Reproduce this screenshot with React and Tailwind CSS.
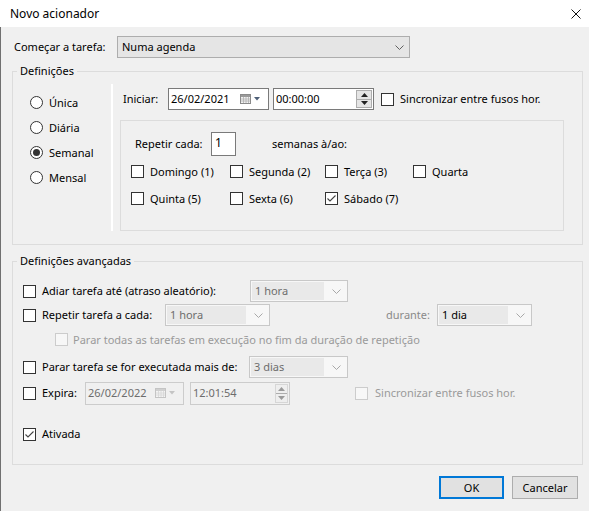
import React from "react";

const Check = ({ checked = false, disabled = false }) => (
  <span
    className={
      disabled
        ? "w-[13px] h-[13px] shrink-0 border border-[#cccccc] bg-[#f7f7f7] flex items-center justify-center"
        : "w-[13px] h-[13px] shrink-0 border border-[#333333] bg-white flex items-center justify-center"
    }
  >
    {checked && (
      <svg width="11" height="11" viewBox="0 0 11 11">
        <path d="M1.5 5.5 L4 8 L9.5 2.5" stroke="#444" strokeWidth="1.1" fill="none" />
      </svg>
    )}
  </span>
);

const Radio = ({ on = false, label }) => (
  <div className="h-[25px] flex items-center gap-[6px]">
    <span className="w-[13px] h-[13px] rounded-full border border-[#333333] bg-white flex items-center justify-center">
      {on && <span className="w-[7px] h-[7px] rounded-full bg-[#333333]" />}
    </span>
    <span>{label}</span>
  </div>
);

const Chevron = ({ color = "#606060" }) => (
  <svg width="9" height="5" viewBox="0 0 9 5">
    <path d="M0.5 0.5 L4.5 4.5 L8.5 0.5" stroke={color} fill="none" />
  </svg>
);

const Combo = ({ text, w, dark = false }) => (
  <div
    className="h-[22px] border border-[#c8c8c8] bg-[#f7f7f7] flex items-stretch shrink-0"
    style={{ width: w }}
  >
    <span
      className={
        dark
          ? "flex-1 m-[1px] bg-[#e9e9e9] pl-[3px] flex items-center text-black"
          : "flex-1 m-[1px] bg-[#e9e9e9] pl-[3px] flex items-center text-[#6d6d6d]"
      }
    >
      {text}
    </span>
    <span className="w-[22px] flex items-center justify-center">
      <Chevron color="#a8a8a8" />
    </span>
  </div>
);

const CalendarIcon = ({ disabled = false }) => (
  <span className="flex items-center gap-[3px]">
    <svg width="11" height="10" viewBox="0 0 11 10">
      <rect x="0.5" y="0.5" width="10" height="9" fill={disabled ? "#f4f4f4" : "#f2f2f2"} stroke={disabled ? "#c4c4c4" : "#8a8a8a"} />
      <rect x="1" y="1" width="9" height="2" fill={disabled ? "#d0d0d0" : "#9a9a9a"} />
      <path d="M3.5 3 V9 M6 3 V9 M8.5 3 V9 M1 5 H10 M1 7 H10" stroke={disabled ? "#d6d6d6" : "#b0b0b0"} strokeWidth="0.8" />
    </svg>
    <svg width="6" height="4" viewBox="0 0 6 4">
      <path d="M0 0 H6 L3 3.5 Z" fill={disabled ? "#c4c4c4" : "#4f6078"} />
    </svg>
  </span>
);

const DateBox = ({ text, disabled = false, w = 101, h = 22 }) => (
  <div
    className={
      disabled
        ? "shrink-0 border border-[#cccccc] bg-[#f0f0f0] flex items-center justify-between pl-[2px] pr-[8px] text-[#6d6d6d]"
        : "shrink-0 border border-[#7a7a7a] bg-white flex items-center justify-between pl-[2px] pr-[8px] text-black"
    }
    style={{ width: w, height: h }}
  >
    <span>{text}</span>
    <CalendarIcon disabled={disabled} />
  </div>
);

const Spinner = ({ disabled = false }) => (
  <div
    className={
      disabled
        ? "w-[13px] my-[1px] mr-[1px] flex flex-col border border-[#d6d6d6] bg-[#eeeeee]"
        : "w-[16px] my-[1px] mr-[1px] flex flex-col border border-[#adadad] bg-[#e5e5e5]"
    }
  >
    <span className="flex-1 flex items-center justify-center border-b border-[#adadad]">
      <svg width="7" height="4" viewBox="0 0 7 4">
        <path d="M0 4 H7 L3.5 0 Z" fill={disabled ? "#9a9a9a" : "#222"} />
      </svg>
    </span>
    <span className="flex-1 flex items-center justify-center">
      <svg width="7" height="4" viewBox="0 0 7 4">
        <path d="M0 0 H7 L3.5 4 Z" fill={disabled ? "#9a9a9a" : "#222"} />
      </svg>
    </span>
  </div>
);

const TimeBox = ({ text, disabled = false, w = 101, h = 22 }) => (
  <div
    className={
      disabled
        ? "shrink-0 border border-[#cccccc] bg-[#f0f0f0] flex items-stretch justify-between pl-[2px] text-[#6d6d6d]"
        : "shrink-0 border border-[#7a7a7a] bg-white flex items-stretch justify-between pl-[2px] text-black"
    }
    style={{ width: w, height: h }}
  >
    <span className="flex items-center">{text}</span>
    <Spinner disabled={disabled} />
  </div>
);

const Day = ({ label, w, checked = false }) => (
  <div className="flex items-center gap-[6px] shrink-0" style={w ? { width: w } : undefined}>
    <Check checked={checked} />
    <span>{label}</span>
  </div>
);

export default function App() {
  return (
    <div className="w-[589px] h-[511px] bg-[#f0f0f0] flex flex-col text-[11px] leading-[16px] text-black font-['Noto_Sans',sans-serif] whitespace-nowrap overflow-hidden">
      {/* title bar */}
      <div className="h-[27px] bg-white flex items-center justify-between pl-[10px] pr-[8px] shrink-0">
        <span className="text-[12px]">Novo acionador</span>
        <svg width="10" height="10" viewBox="0 0 10 10">
          <path d="M0.5 0.5 L9.5 9.5 M9.5 0.5 L0.5 9.5" stroke="#111" strokeWidth="1" />
        </svg>
      </div>

      <div className="flex-1 border-l border-[#707070] pl-[11px] flex flex-col">
        <div className="mt-[9px] h-[22px] flex items-center">
          <span className="ml-[2px] w-[103px]">Começar a tarefa:</span>
          <div className="w-[293px] h-[22px] border border-[#adadad] bg-[#e5e5e5] flex items-center justify-between pl-[4px] pr-[5px]">
            <span>Numa agenda</span>
            <Chevron />
          </div>
        </div>

        {/* Definições */}
        <fieldset className="mt-[5px] w-[571px] h-[182px] border border-[#dcdcdc] min-w-0">
          <legend className="ml-[4px] px-[3px]">Definições</legend>
          <div className="flex items-start">
            <div className="w-[98px] pt-[11px] pl-[17px] flex flex-col">
              <Radio label="Única" />
              <Radio label="Diária" />
              <Radio label="Semanal" on />
              <Radio label="Mensal" />
            </div>
            <div className="mt-[5px] h-[147px] w-[2px] border-l border-[#a0a0a0] border-r border-white" />
            <div className="pl-[7px] pt-[9px] flex flex-col">
              <div className="ml-[3px] h-[22px] flex items-center">
                <span className="w-[45px]">Iniciar:</span>
                <DateBox text="26/02/2021" />
                <div className="ml-[4px]">
                  <TimeBox text="00:00:00" />
                </div>
                <span className="ml-[7px]">
                  <Check />
                </span>
                <span className="ml-[6px]">Sincronizar entre fusos hor.</span>
              </div>

              <div className="mt-[10px] w-[444px] h-[111px] border border-[#dcdcdc] flex flex-col">
                <div className="ml-[14px] mt-[11px] h-[24px] flex items-center">
                  <span className="w-[76px]">Repetir cada:</span>
                  <div className="w-[25px] h-[24px] border border-[#7a7a7a] bg-white pl-[3px] pt-[2px] text-[12px]">1</div>
                  <span className="ml-[36px]">semanas à/ao:</span>
                </div>
                <div className="ml-[10px] mt-[2px] h-[27px] flex items-center">
                  <Day label="Domingo (1)" w={99} />
                  <Day label="Segunda (2)" w={95} />
                  <Day label="Terça (3)" w={88} />
                  <Day label="Quarta" />
                </div>
                <div className="ml-[10px] h-[27px] flex items-center">
                  <Day label="Quinta (5)" w={99} />
                  <Day label="Sexta (6)" w={95} />
                  <Day label="Sábado (7)" checked />
                </div>
              </div>
            </div>
          </div>
        </fieldset>

        {/* Definições avançadas */}
        <fieldset className="mt-[8px] w-[571px] h-[212px] border border-[#dcdcdc] min-w-0">
          <legend className="ml-[4px] px-[3px]">Definições avançadas</legend>
          <div className="pl-[10px] flex flex-col">
            <div className="mt-[10px] h-[24px] flex items-center">
              <Check />
              <span className="ml-[6px] w-[208px]">Adiar tarefa até (atraso aleatório):</span>
              <Combo text="1 hora" w={98} />
            </div>
            <div className="h-[24px] flex items-center">
              <Check />
              <span className="ml-[6px] w-[123px]">Repetir tarefa a cada:</span>
              <Combo text="1 hora" w={105} />
              <span className="w-[167px] text-right pr-[7px] text-[#8a8a8a]">durante:</span>
              <Combo text="1 dia" w={95} dark />
            </div>
            <div className="h-[25px] pl-[32px] flex items-center">
              <Check disabled />
              <span className="ml-[5px] text-[#9a9a9a]">
                Parar todas as tarefas em execução no fim da duração de repetição
              </span>
            </div>
            <div className="mt-[3px] h-[24px] flex items-center">
              <Check />
              <span className="ml-[6px] w-[207px]">Parar tarefa se for executada mais de:</span>
              <Combo text="3 dias" w={99} />
            </div>
            <div className="mt-[2px] h-[24px] flex items-center">
              <Check />
              <span className="ml-[6px] w-[43px]">Expira:</span>
              <DateBox text="26/02/2022" disabled w={99} h={23} />
              <div className="ml-[6px]">
                <TimeBox text="12:01:54" disabled w={100} h={23} />
              </div>
              <span className="ml-[65px]">
                <Check disabled />
              </span>
              <span className="ml-[7px] text-[#9a9a9a]">Sincronizar entre fusos hor.</span>
            </div>
            <div className="mt-[17px] h-[24px] flex items-center">
              <Check checked />
              <span className="ml-[6px]">Ativada</span>
            </div>
          </div>
        </fieldset>

        <div className="mt-[11px] w-[566px] flex justify-end gap-[8px]">
          <button className="w-[65px] h-[23px] border-2 border-[#0078d7] bg-[#e1e1e1] flex items-center justify-center">
            OK
          </button>
          <button className="w-[66px] h-[23px] border border-[#adadad] bg-[#e1e1e1] flex items-center justify-center">
            Cancelar
          </button>
        </div>
      </div>
    </div>
  );
}
